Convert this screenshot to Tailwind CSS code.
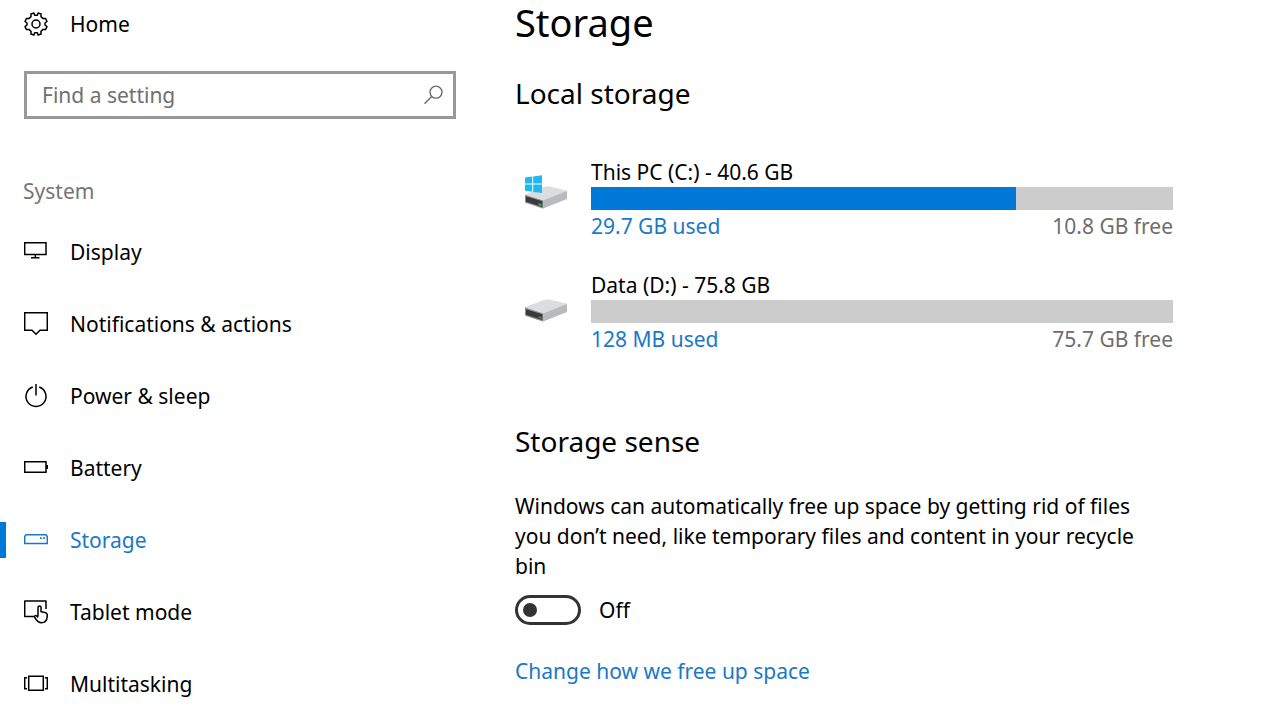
<!DOCTYPE html>
<html lang="en">
  <head>
    <meta charset="UTF-8" />
    <meta name="viewport" content="width=device-width, initial-scale=1.0" />
    <title>Settings - Storage</title>
    <script src="https://cdn.jsdelivr.net/npm/@tailwindcss/browser@4"></script>
  </head>
  <body class="flex h-screen overflow-hidden bg-white font-['Noto_Sans',sans-serif] text-[21px] leading-[30px] text-black">
    <!-- Sidebar -->
    <aside class="w-[480px] shrink-0 pr-6">
      <a href="#" class="flex h-[47px] items-center gap-[22px] pl-6">
        <svg class="size-6" viewBox="0 0 24 24" fill="none" stroke="currentColor" stroke-width="1.5" stroke-linejoin="round">
          <path d="M9.9 1 L10.7 3.3 L13.3 3.3 L14.1 1 L17.1 2 L16.9 4.5 L19 6.6 L21.5 6.4 L23 9.5 L21 11 L21 13 L23 14.6 L21.5 17.6 L19 17.4 L16.9 19.5 L17.1 22 L14.1 23 L13.3 20.7 L10.7 20.7 L9.9 23 L6.9 22 L7.1 19.5 L5 17.4 L2.5 17.6 L1 14.6 L3 13 L3 11 L1 9.5 L2.5 6.4 L5 6.6 L7.1 4.5 L6.9 2 Z" />
          <circle cx="12" cy="12" r="4" />
        </svg>
        <span>Home</span>
      </a>

      <!-- Search -->
      <form class="mt-6 ml-6 flex h-12 items-center border-3 border-[#999999] pr-2.5 pl-[15px]">
        <input
          type="text"
          aria-label="Find a setting"
          placeholder="Find a setting"
          class="min-w-0 flex-1 placeholder:text-[#707070] focus:outline-none"
        />
        <button type="button" aria-label="Search">
          <svg class="size-5" viewBox="0 0 20 20" fill="none" stroke="#666666" stroke-width="1.3">
            <circle cx="13" cy="7.2" r="6" />
            <path d="M8.7 11.5 L1.5 18.7" />
          </svg>
        </button>
      </form>

      <h2 class="mt-[57px] pl-[23px] text-[#767676]">System</h2>

      <nav class="mt-2.5">
        <a href="#" class="flex h-[72px] items-center gap-[22px] pl-6">
          <svg class="size-6" viewBox="0 0 24 24" fill="none" stroke="currentColor" stroke-width="1.5">
            <path d="M0.7 2.7 H22 V14.5 H0.7 Z M11.3 14.5 V17.7 M7 17.7 H15.5" />
          </svg>
          <span>Display</span>
        </a>
        <a href="#" class="flex h-[72px] items-center gap-[22px] pl-6">
          <svg class="size-6" viewBox="0 0 24 24" fill="none" stroke="currentColor" stroke-width="1.5">
            <path d="M0.7 0.8 H23.3 V18.3 H16 L12 22.3 L8 18.3 H0.7 Z" />
          </svg>
          <span>Notifications &amp; actions</span>
        </a>
        <a href="#" class="flex h-[72px] items-center gap-[22px] pl-6">
          <svg class="size-6" viewBox="0 0 24 24" fill="none" stroke="currentColor" stroke-width="1.5">
            <path d="M8.8 3 A10 10 0 1 0 15.2 3 M12 0 V11.5" />
          </svg>
          <span>Power &amp; sleep</span>
        </a>
        <a href="#" class="flex h-[72px] items-center gap-[22px] pl-6">
          <svg class="size-6" viewBox="0 0 24 24" fill="none" stroke="currentColor" stroke-width="1.5">
            <path d="M0.7 5.7 H22 V16.3 H0.7 Z M23.2 9 V13" />
          </svg>
          <span>Battery</span>
        </a>
        <a href="#" aria-current="page" class="flex h-[72px] items-center text-[#1a78c8]">
          <span class="mr-[18px] h-9 w-1.5 bg-[#0078d7]"></span>
          <svg class="mr-[22px] size-6" viewBox="0 0 24 24" fill="none" stroke="currentColor" stroke-width="1.5">
            <path d="M0.7 8.5 L2 6.7 H22 L23.3 8.5 V15.5 H0.7 Z" />
            <path d="M16 10.2 H17.7 M19.2 10.2 H20.9" stroke-width="1.7" />
          </svg>
          <span>Storage</span>
        </a>
        <a href="#" class="flex h-[72px] items-center gap-[22px] pl-6">
          <svg class="size-6" viewBox="0 0 24 24" fill="none" stroke="currentColor" stroke-width="1.5" stroke-linejoin="round">
            <path d="M10 16.5 H0.7 V1 H22 V9" />
            <path d="M14 16.5 V7.3 C14 5.5 17 5.5 17 7.3 V11.7 L21 12.5 C22.6 12.9 23.3 13.7 23.3 15.2 C23.3 19.8 21.5 22.8 17.3 22.8 C14.8 22.8 13.2 21.2 12.3 19.7 L10.7 17.5 C10 16 11.5 15 12.4 15.8 L14 17.4" />
          </svg>
          <span>Tablet mode</span>
        </a>
        <a href="#" class="flex h-[72px] items-center gap-[22px] pl-6">
          <svg class="size-6" viewBox="0 0 24 24" fill="none" stroke="currentColor" stroke-width="1.5">
            <path d="M4.7 4.2 H19.3 V18.3 H4.7 Z M3 5.7 H0.7 V16.7 H3 M21 5.7 H23.3 V16.7 H21" />
          </svg>
          <span>Multitasking</span>
        </a>
      </nav>
    </aside>

    <!-- Main Content -->
    <main class="flex-1 pr-[92px] pl-[35px]">
      <h1 class="text-[38px] leading-[44px]">Storage</h1>

      <h2 class="mt-[29px] text-[28px] leading-10">Local storage</h2>

      <section class="mt-11 space-y-7">
        <!-- C: -->
        <a href="#" class="flex">
          <svg class="mt-[17px] ml-2 h-9 w-[68px] shrink-0" viewBox="0 0 68 36">
            <path d="M2 21 L22 13 Q24 12.4 26 12.8 L44 17 V25 L20 34.5 L2 28.5 Z" fill="#b9babd" />
            <path d="M2 21 L22 13 Q24 12.4 26 12.8 L44 17 L20 26.5 Z" fill="#dcdde0" />
            <path d="M2 21 L20 26.5 V34.5 L2 28.5 Z" fill="#8d8f91" />
            <path d="M3 22.3 L19.3 27.2 V33 L3 27.8 Z" fill="#383b3a" />
            <path d="M15.5 29 L18.5 29.9 V32 L15.5 31.1 Z" fill="#35b44a" />
            <path d="M2 3.6 L9.2 2.6 V9.6 H2 Z M10.2 2.4 L19 1.2 V9.6 H10.2 Z M2 10.6 H9.2 V17.8 L2 16.8 Z M10.2 10.6 H19 V19 L10.2 17.9 Z" fill="#1fb9ef" />
          </svg>
          <div class="min-w-0 flex-1">
            <p>This PC (C:) - 40.6 GB</p>
            <div class="h-[23px] bg-[#cccccc]">
              <div class="h-full bg-[#0078d7]" style="width: 73%"></div>
            </div>
            <div class="flex justify-between leading-8">
              <span class="text-[#1a78c8]">29.7 GB used</span>
              <span class="text-[#6e6e6e]">10.8 GB free</span>
            </div>
          </div>
        </a>

        <!-- D: -->
        <a href="#" class="flex">
          <svg class="mt-[17px] ml-2 h-9 w-[68px] shrink-0" viewBox="0 0 68 36">
            <path d="M2 20.5 L22 13 Q24 12.4 26 12.8 L44 17 V25 L20 34.5 L2 28.5 Z" fill="#b9babd" />
            <path d="M2 20.5 L22 13 Q24 12.4 26 12.8 L44 17 L20 26.5 Z" fill="#dcdde0" />
            <path d="M2 20.5 L20 26.5 V34.5 L2 28.5 Z" fill="#8d8f91" />
            <path d="M3 22.3 L19.3 27.2 V33 L3 27.8 Z" fill="#383b3a" />
            <path d="M15.5 29 L18.5 29.9 V32 L15.5 31.1 Z" fill="#4c7f55" />
          </svg>
          <div class="min-w-0 flex-1">
            <p>Data (D:) - 75.8 GB</p>
            <div class="h-[23px] bg-[#cccccc]"></div>
            <div class="flex justify-between leading-8">
              <span class="text-[#1a78c8]">128 MB used</span>
              <span class="text-[#6e6e6e]">75.7 GB free</span>
            </div>
          </div>
        </a>
      </section>

      <h2 class="mt-[66px] text-[28px] leading-10">Storage sense</h2>

      <p class="mt-[30px] max-w-[640px]">
        Windows can automatically free up space by getting rid of files you don’t need, like temporary files and content in your recycle bin
      </p>

      <label class="mt-3.5 flex w-fit items-center gap-[18px]">
        <input
          type="checkbox"
          role="switch"
          class="h-[30px] w-[66px] appearance-none rounded-full border-3 border-[#333333] p-[5px] before:block before:size-3.5 before:rounded-full before:bg-[#333333] checked:border-[#0078d7] checked:bg-[#0078d7] checked:before:ml-auto checked:before:bg-white"
        />
        <span>Off</span>
      </label>

      <a href="#" class="mt-[31px] block w-fit text-[#1a78c8]">Change how we free up space</a>
    </main>
  </body>
</html>
